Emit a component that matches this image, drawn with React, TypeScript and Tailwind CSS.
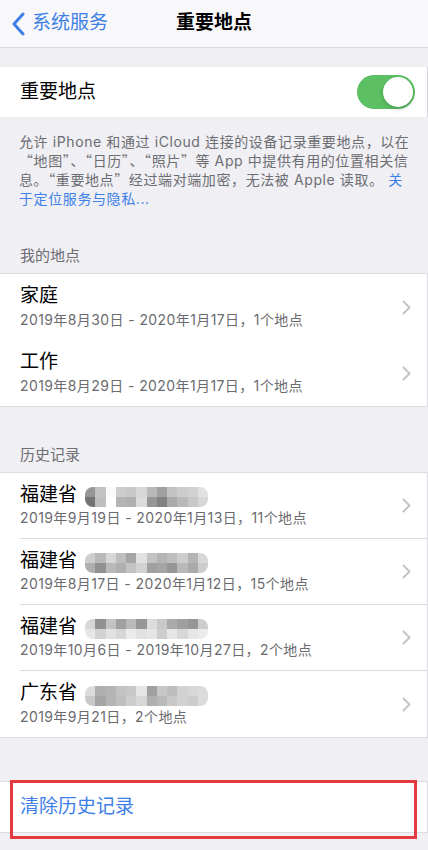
import React from 'react'

const font = { fontFamily: 'Inter, "Noto Sans CJK SC", sans-serif' }
const cjk = { fontFamily: '"Noto Sans CJK SC", sans-serif' }

const history = [
  {
    prov: '福建省',
    sub: '2019年9月19日 - 2020年1月13日，11个地点',
    cells: [
      [150, 195, 250, 205, 200, 215, 185, 160, 195, 205, 210, 225],
      [115, 190, 255, 180, 175, 220, 150, 130, 170, 185, 200, 215],
    ],
  },
  {
    prov: '福建省',
    sub: '2019年8月17日 - 2020年1月12日，15个地点',
    cells: [
      [205, 185, 215, 190, 165, 225, 195, 180, 190, 205, 180, 215],
      [175, 145, 185, 175, 195, 210, 160, 165, 150, 185, 170, 205],
    ],
  },
  {
    prov: '福建省',
    sub: '2019年10月6日 - 2019年10月27日，2个地点',
    cells: [
      [215, 145, 195, 160, 185, 150, 220, 200, 170, 160, 150, 205],
      [230, 210, 225, 215, 235, 225, 230, 205, 230, 215, 230, 235],
    ],
  },
  {
    prov: '广东省',
    sub: '2019年9月21日，2个地点',
    cells: [
      [220, 175, 180, 195, 200, 230, 160, 200, 190, 210, 215, 220],
      [200, 165, 180, 190, 205, 215, 175, 185, 200, 210, 205, 220],
    ],
  },
]

function Chevron() {
  return (
    <svg width="9" height="15" viewBox="0 0 9 15" className="shrink-0">
      <polyline points="1.5,1.5 7.5,7.5 1.5,13.5" fill="none" stroke="#c5c5c9" strokeWidth="2" strokeLinecap="round" strokeLinejoin="round" />
    </svg>
  )
}

function Mosaic({ cells }: { cells: number[][] }) {
  return (
    <div className="ml-[8px] mt-[4px] flex flex-col overflow-hidden rounded-[8px]">
      {cells.map((row, r) => (
        <div key={r} className="flex">
          {row.map((g, c) => (
            <div key={c} className="h-[10px] w-[10.25px]" style={{ backgroundColor: `rgb(${g},${g},${g})` }} />
          ))}
        </div>
      ))}
    </div>
  )
}

function Row({ title, sub, extra, border }: { title: string; sub: string; extra?: React.ReactNode; border?: boolean }) {
  return (
    <div className="flex h-[66px] items-center pl-5">
      <div className={`flex h-full flex-1 items-center pr-[16px] ${border ? 'border-b border-[#dcdce0]' : ''}`}>
        <div className="flex flex-1 flex-col pt-[1px]">
          <div className="flex h-[24px] items-center text-[19px] text-black">
            {title}
            {extra}
          </div>
          <div className="text-[14px] leading-[22px] tracking-[0.4px] text-[#6b6b6f]">{sub}</div>
        </div>
        <Chevron />
      </div>
    </div>
  )
}

const Q = ({ children }: { children: React.ReactNode }) => <span style={cjk}>{children}</span>

export default function App() {
  return (
    <div className="min-h-[850px] w-[428px] bg-[#efeff4]" style={font}>
      {/* Nav bar */}
      <div className="relative flex h-[48px] items-center border-b border-[#dadade] bg-[#f8f8fa]">
        <div className="flex items-center pl-[11px]">
          <svg width="14" height="24" viewBox="0 0 14 24">
            <polyline points="12,2 3,12 12,22" fill="none" stroke="#3d7fe6" strokeWidth="3" strokeLinecap="round" strokeLinejoin="round" />
          </svg>
          <span className="ml-[7px] text-[19px] text-[#3d7fe6]">系统服务</span>
        </div>
        <div className="pointer-events-none absolute inset-x-0 text-center text-[19px] font-semibold text-black">重要地点</div>
      </div>

      {/* Toggle */}
      <div className="mt-[19px] flex h-[50px] items-center justify-between border-r border-[#d4d4d8] bg-white pl-5 pr-[12px]">
        <span className="text-[19px] text-black">重要地点</span>
        <div className="flex h-[34px] w-[58px] items-center justify-end rounded-full bg-[#5cc063] pr-[2px]">
          <div className="h-[30px] w-[30px] rounded-full bg-white shadow-[0_2px_4px_rgba(0,0,0,0.2)]" />
        </div>
      </div>

      <div className="flex flex-col px-[19px] pt-[15px] text-[14px] leading-[19px] tracking-[0.6px] text-[#6d6d72] whitespace-nowrap">
        <span>允许 iPhone 和通过 iCloud 连接的设备记录重要地点，以在</span>
        <span>
          <Q>“</Q>地图<Q>”</Q>、<Q>“</Q>日历<Q>”</Q>、<Q>“</Q>照片<Q>”</Q>等 App 中提供有用的位置相关信
        </span>
        <span>
          息。<Q>“</Q>重要地点<Q>”</Q>经过端对端加密，无法被 Apple 读取。 <span className="text-[#3d7fe6]">关</span>
        </span>
        <span className="text-[#3d7fe6]">于定位服务与隐私...</span>
      </div>

      {/* My places */}
      <div className="mt-[38px] px-5 text-[15px] leading-[20px] text-[#6d6d72]">我的地点</div>
      <div className="mt-[7px] border-y border-r border-[#dcdce0] bg-white">
        <Row title="家庭" sub="2019年8月30日 - 2020年1月17日，1个地点" />
        <Row title="工作" sub="2019年8月29日 - 2020年1月17日，1个地点" />
      </div>

      {/* History */}
      <div className="mt-[38px] px-5 text-[15px] leading-[20px] text-[#6d6d72]">历史记录</div>
      <div className="mt-[7px] border-y border-r border-[#dcdce0] bg-white">
        {history.map((h, i) => (
          <Row
            key={i}
            title={h.prov}
            sub={h.sub}
            border={i < history.length - 1}
            extra={<Mosaic cells={h.cells} />}
          />
        ))}
      </div>

      {/* Clear */}
      <div className="relative mt-[43px] flex h-[52px] items-center border-y border-r border-[#dcdce0] bg-white pl-5">
        <span className="text-[19px] text-[#3d7fe6]">清除历史记录</span>
        <div className="pointer-events-none absolute left-[10px] right-[10px] top-[-2px] h-[59px] border-[3px] border-[#e3393f]" />
      </div>
    </div>
  )
}
